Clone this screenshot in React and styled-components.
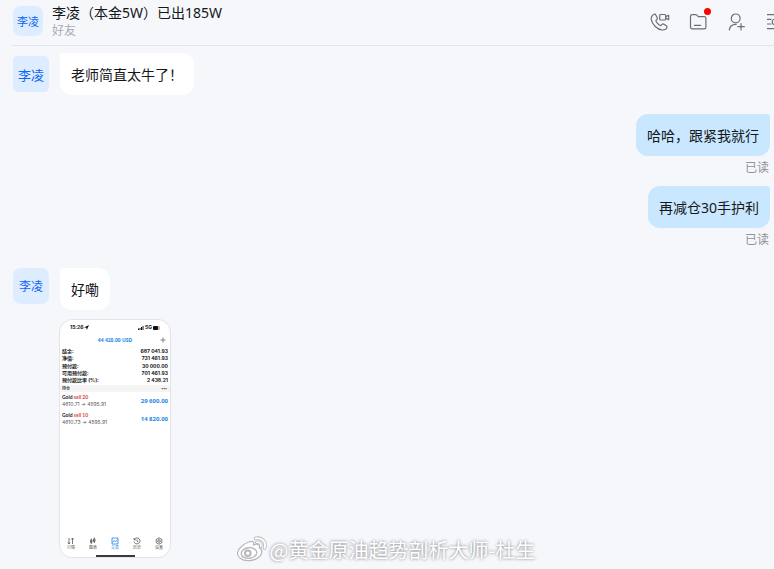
import styled, { createGlobalStyle } from "styled-components";

const COLORS = {
	page: "#f5f7fb",
	line: "#e2e4ea",
	avatar: "#deecff",
	blue: "#0a66f5",
	sent: "#c9e7ff",
	white: "#ffffff",
	text: "#15171a",
	muted: "#a9acb2",
	read: "#8f9299",
	icon: "#6b6e74",
	red: "#ff0000",
	trade: "#1c87e5",
	sell: "#d8483e",
	mark: "#b4b6ba",
};

const FONT = `"Noto Sans", "Noto Sans CJK SC", sans-serif`;

const stats = [
	["结余:", "687 041.93"],
	["净值:", "731 461.93"],
	["预付款:", "30 000.00"],
	["可用预付款:", "701 461.93"],
	["预付款比率 (%):", "2 438.21"],
];

const positions = [
	{ side: "sell 20", from: "4610.71", to: "4595.91", profit: "29 600.00" },
	{ side: "sell 10", from: "4610.73", to: "4595.91", profit: "14 820.00" },
];

const tabs = [
	{ label: "行情", icon: <path d="M2 1V7M.8 5.5L2 7L3.2 5.5M5.5 7V1M4.3 2.5L5.5 1L6.7 2.5" /> },
	{ label: "图表", icon: <path d="M2.3 1.5V7M5.3 .5V6M1.5 3H3V5.5H1.5ZM4.5 2H6V4.5H4.5Z" /> },
	{ label: "交易", icon: <path d="M1 1H7V7H1ZM1.5 5.5L3 3.5L4.5 5L6.5 2.5" />, active: true },
	{ label: "历史", icon: <path d="M1.3 2.5A3 3 0 1 1 1 4.5M1 1V2.8H2.8M4 2.5V4.3L5.3 5" /> },
	{ label: "设置", icon: <path d="M4 .8L6.8 2.4V5.6L4 7.2L1.2 5.6V2.4ZM4 2.7A1.3 1.3 0 1 0 4 5.3A1.3 1.3 0 1 0 4 2.7" /> },
];

const CallIcon = () => (
	<Icon viewBox="0 0 20 20">
		<path d="M4.2 2.2C2 3.2 .9 5.2 1.3 7.7C2.2 12.5 7.2 17.6 12.2 18C14.6 18.1 16.6 17 17 15.4C17.2 14.7 16.9 14.2 16.3 13.8L13.9 12.2C13.2 11.8 12.6 11.9 12.1 12.4L11.3 13.2C10.9 13.6 10.3 13.6 9.8 13.3C8.2 12.3 7 11 6.1 9.5C5.8 9 5.9 8.5 6.3 8.1L7 7.4C7.5 6.9 7.5 6.3 7.2 5.7L5.8 2.9C5.5 2.2 4.9 1.9 4.2 2.2Z" />
		<rect x="9.7" y="2.5" width="6" height="5.5" rx="1" />
		<path d="M15.7 4.6L18.7 3.2V7.6L15.7 6.2" />
	</Icon>
);

const FolderIcon = () => (
	<Icon viewBox="0 0 20 20">
		<path d="M1.5 4.3C1.5 3.3 2.2 2.6 3.2 2.6H6.6C7.2 2.6 7.6 2.8 8 3.2L9.3 4.6H15.2C16.2 4.6 16.9 5.3 16.9 6.3V15.2C16.9 16.2 16.2 16.9 15.2 16.9H3.2C2.2 16.9 1.5 16.2 1.5 15.2Z" />
		<path d="M5.5 13.4H11.7" />
	</Icon>
);

const AddFriendIcon = () => (
	<Icon viewBox="0 0 20 20">
		<circle cx="7.7" cy="6.4" r="4.4" />
		<path d="M1.3 17.9C1.6 14.7 4 12.4 8.2 12.3" />
		<path d="M13 11.5V18M9.8 14.7H16.3" />
	</Icon>
);

const MenuIcon = () => (
	<Icon viewBox="0 0 20 20">
		<path d="M0 2.7H16M0 7.3H4M0 12H4M0 16.7H16" />
		<circle cx="8" cy="9.9" r="2.8" />
	</Icon>
);

const WeiboLogo = () => (
	<Logo viewBox="0 0 32 28">
		<path
			fill={COLORS.white}
			stroke={COLORS.mark}
			strokeWidth="1.2"
			d="M13 6C16 4.5 18.5 5.5 17.5 9C21 7.5 24.5 8.3 23.3 12C27 13.5 26.5 18 23 21C18.5 25 9.5 26 4.5 22.5C-.5 19 1.5 14 5.5 10.5C8 8.2 10.5 6.7 13 6Z"
		/>
		<ellipse cx="13" cy="17" rx="7.8" ry="5.3" fill="none" stroke={COLORS.mark} strokeWidth="1.4" transform="rotate(-8 13 17)" />
		<circle cx="11.8" cy="17.3" r="2.8" fill={COLORS.white} stroke={COLORS.mark} strokeWidth="2" />
		<path d="M19.5 2.5C26 .8 30.5 6 28.5 12" fill="none" stroke={COLORS.mark} strokeWidth="3.6" strokeLinecap="round" />
		<path d="M19.5 2.5C26 .8 30.5 6 28.5 12" fill="none" stroke={COLORS.white} strokeWidth="2" strokeLinecap="round" />
		<path d="M20.5 6.3C23.5 5.6 25.5 7.8 24.8 10.5" fill="none" stroke={COLORS.mark} strokeWidth="3.2" strokeLinecap="round" />
		<path d="M20.5 6.3C23.5 5.6 25.5 7.8 24.8 10.5" fill="none" stroke={COLORS.white} strokeWidth="1.6" strokeLinecap="round" />
	</Logo>
);

const TradeShot = () => (
	<Shot>
		<StatusBar>
			<span>
				15:26
				<svg width="5" height="5" viewBox="0 0 5 5">
					<path d="M0 2.5L5 0L2.8 5L2.3 2.8Z" fill="#111" />
				</svg>
			</span>
			<span>
				<svg width="6" height="4" viewBox="0 0 6 4">
					<path d="M0 4V2.6H1V4ZM1.5 4V2H2.5V4ZM3 4V1H4V4ZM4.5 4V0H5.5V4Z" fill="#111" />
				</svg>
				5G
				<svg width="8" height="4" viewBox="0 0 8 4">
					<rect width="7" height="4" rx="1" fill="#bbb" />
					<rect width="5" height="4" rx="1" fill="#111" />
				</svg>
			</span>
		</StatusBar>
		<ShotTitle>
			<span>44 420.00 USD</span>
			<AddButton aria-label="新订单">
				<svg width="6" height="6" viewBox="0 0 6 6">
					<path d="M3 .5V5.5M.5 3H5.5" stroke="#555" strokeWidth=".7" />
				</svg>
			</AddButton>
		</ShotTitle>
		<Stats>
			{stats.map(([name, value]) => (
				<div key={name}>
					<dt>{name}</dt>
					<dd>{value}</dd>
				</div>
			))}
		</Stats>
		<SectionBar>
			<span>持仓</span>
			<span>•••</span>
		</SectionBar>
		{positions.map((p) => (
			<Position key={p.side}>
				<div>
					<Symbol>
						Gold <em>{p.side}</em>
					</Symbol>
					<Price>
						{p.from} → {p.to}
					</Price>
				</div>
				<Profit>{p.profit}</Profit>
			</Position>
		))}
		<TabBar>
			{tabs.map((t) => (
				<Tab key={t.label} $active={t.active}>
					<svg width="8" height="8" viewBox="0 0 8 8">
						{t.icon}
					</svg>
					{t.label}
				</Tab>
			))}
		</TabBar>
		<HomeBar />
	</Shot>
);

const App = () => {
	return (
		<Page>
			<GlobalStyle />
			<Header>
				<Avatar $size={30} $font={11} $radius={8}>
					李凌
				</Avatar>
				<Contact>
					<Name>李凌（本金5W）已出185W</Name>
					<Relation>好友</Relation>
				</Contact>
				<Actions>
					<IconButton aria-label="通话">
						<CallIcon />
					</IconButton>
					<IconButton aria-label="文件">
						<FolderIcon />
						<Dot />
					</IconButton>
					<IconButton aria-label="添加好友">
						<AddFriendIcon />
					</IconButton>
					<IconButton aria-label="菜单">
						<MenuIcon />
					</IconButton>
				</Actions>
			</Header>
			<Chat>
				<Received $align="center">
					<Avatar $size={36} $font={13} $radius={5}>
						李凌
					</Avatar>
					<Bubble>老师简直太牛了！</Bubble>
				</Received>
				<Sent>
					<Bubble $mine>哈哈，跟紧我就行</Bubble>
					<ReadMark>已读</ReadMark>
					<Bubble $mine>再减仓30手护利</Bubble>
					<ReadMark>已读</ReadMark>
				</Sent>
				<Received $align="flex-start">
					<Avatar $size={36} $font={12} $radius={8}>
						李凌
					</Avatar>
					<Stack>
						<Bubble>好嘞</Bubble>
						<TradeShot />
					</Stack>
				</Received>
			</Chat>
			<Watermark>
				<WeiboLogo />
				<span>@黄金原油趋势剖析大师-杜生</span>
			</Watermark>
		</Page>
	);
};

const GlobalStyle = createGlobalStyle`
	* {
		box-sizing: border-box;
	}
	body {
		margin: 0;
		background: ${COLORS.page};
		color: ${COLORS.text};
		font-family: ${FONT};
		font-size: 14px;
	}
	button {
		padding: 0;
		border: 0;
		background: none;
		font-family: inherit;
		cursor: pointer;
	}
`;
const Page = styled.div`
	position: relative;
	min-height: 100vh;
	overflow: hidden;
`;
const Header = styled.header`
	height: 46px;
	margin-left: 12px;
	padding: 0 0 4px 1px;
	border-bottom: 1px solid ${COLORS.line};
	display: flex;
	align-items: center;
`;
const Avatar = styled.div`
	width: ${(prop) => prop.$size}px;
	height: ${(prop) => prop.$size}px;
	border-radius: ${(prop) => prop.$radius}px;
	font-size: ${(prop) => prop.$font}px;
	background: ${COLORS.avatar};
	color: ${COLORS.blue};
	display: flex;
	align-items: center;
	justify-content: center;
	flex-shrink: 0;
`;
const Contact = styled.div`
	margin-left: 9px;
	flex-grow: 1;
	white-space: nowrap;
`;
const Name = styled.div`
	line-height: 20px;
`;
const Relation = styled.div`
	font-size: 12px;
	line-height: 16px;
	color: ${COLORS.muted};
`;
const Actions = styled.div`
	display: flex;
	gap: 19px;
	margin-right: -13px;
	padding-top: 2px;
`;
const IconButton = styled.button`
	position: relative;
	width: 20px;
	height: 20px;
`;
const Icon = styled.svg`
	display: block;
	width: 20px;
	height: 20px;
	fill: none;
	stroke: ${COLORS.icon};
	stroke-width: 1.2;
	stroke-linecap: round;
	stroke-linejoin: round;
`;
const Dot = styled.span`
	position: absolute;
	top: -4px;
	right: -2px;
	width: 7px;
	height: 7px;
	border-radius: 50%;
	background: ${COLORS.red};
`;
const Chat = styled.main`
	padding: 7px 4px 12px 13px;
	display: flex;
	flex-direction: column;
`;
const Received = styled.div`
	display: flex;
	align-items: ${(prop) => prop.$align};
	gap: 11px;
`;
const Bubble = styled.div`
	width: fit-content;
	padding: 12px 11px 10px;
	line-height: 20px;
	background: ${(prop) => (prop.$mine ? COLORS.sent : COLORS.white)};
	border-radius: ${(prop) => (prop.$mine ? "12px 4px 12px 12px" : "4px 12px 12px 12px")};
`;
const Sent = styled.div`
	margin: 19px 0 20px;
	display: flex;
	flex-direction: column;
	align-items: flex-end;
`;
const ReadMark = styled.div`
	padding: 4px 1px 0 0;
	font-size: 12px;
	line-height: 16px;
	color: ${COLORS.read};
	& + div {
		margin-top: 10px;
	}
`;
const Stack = styled.div`
	display: flex;
	flex-direction: column;
	gap: 9px;
`;
const Shot = styled.section`
	width: 112px;
	height: 239px;
	margin-left: -1px;
	border: 1px solid ${COLORS.line};
	border-radius: 13px;
	background: ${COLORS.white};
	overflow: hidden;
	display: flex;
	flex-direction: column;
	font-family: Inter, "Noto Sans CJK SC", sans-serif;
	font-size: 5px;
	line-height: 7px;
`;
const StatusBar = styled.div`
	padding: 4px 9px 0 10px;
	display: flex;
	justify-content: space-between;
	font-weight: 700;
	span {
		display: flex;
		align-items: center;
		gap: 1px;
	}
`;
const ShotTitle = styled.div`
	margin-top: 4px;
	padding: 0 4px;
	display: grid;
	grid-template-columns: 6px 1fr 6px;
	align-items: center;
	text-align: center;
	color: ${COLORS.trade};
	font-family: "Open Sans", sans-serif;
	line-height: 10px;
	font-weight: 700;
	span {
		grid-column: 2;
	}
`;
const AddButton = styled.button`
	width: 6px;
	height: 6px;
	line-height: 0;
`;
const Stats = styled.dl`
	height: 36px;
	margin: 3px 2px 1px;
	display: flex;
	flex-direction: column;
	justify-content: space-between;
	font-weight: 700;
	div {
		display: flex;
		justify-content: space-between;
	}
	dd {
		margin: 0;
	}
`;
const SectionBar = styled.div`
	padding: 0 3px 0 2px;
	display: flex;
	justify-content: space-between;
	background: #f5f5f6;
	font-size: 4px;
	font-weight: 700;
	color: #444;
`;
const Position = styled.div`
	height: 18px;
	padding: 0 2px;
	display: flex;
	align-items: center;
	justify-content: space-between;
`;
const Symbol = styled.div`
	font-family: Lato, sans-serif;
	font-weight: 700;
	em {
		font-style: normal;
		color: ${COLORS.sell};
	}
`;
const Price = styled.div`
	color: #555;
	white-space: nowrap;
`;
const Profit = styled.div`
	font-family: "Open Sans", sans-serif;
	font-size: 6px;
	font-weight: 700;
	color: ${COLORS.trade};
`;
const TabBar = styled.nav`
	margin-top: auto;
	display: flex;
`;
const Tab = styled.button`
	flex: 1;
	display: flex;
	flex-direction: column;
	align-items: center;
	font-size: 4px;
	line-height: 5px;
	color: ${(prop) => (prop.$active ? COLORS.trade : "#555")};
	svg {
		fill: none;
		stroke: currentColor;
		stroke-width: 0.8;
	}
`;
const HomeBar = styled.div`
	width: 39px;
	height: 2px;
	margin: 5px auto 0;
	background: #3b3b3d;
`;
const Watermark = styled.div`
	position: absolute;
	left: 0;
	right: 0;
	bottom: 5px;
	padding-right: 3px;
	display: flex;
	align-items: center;
	justify-content: center;
	gap: 2px;
	color: ${COLORS.white};
	font-family: "Noto Sans CJK SC", sans-serif;
	font-size: 20px;
	line-height: 30px;
	text-shadow: 0 0 3px rgba(80, 82, 88, 0.8);
	pointer-events: none;
	white-space: nowrap;
`;
const Logo = styled.svg`
	width: 32px;
	height: 28px;
`;

export default App;
